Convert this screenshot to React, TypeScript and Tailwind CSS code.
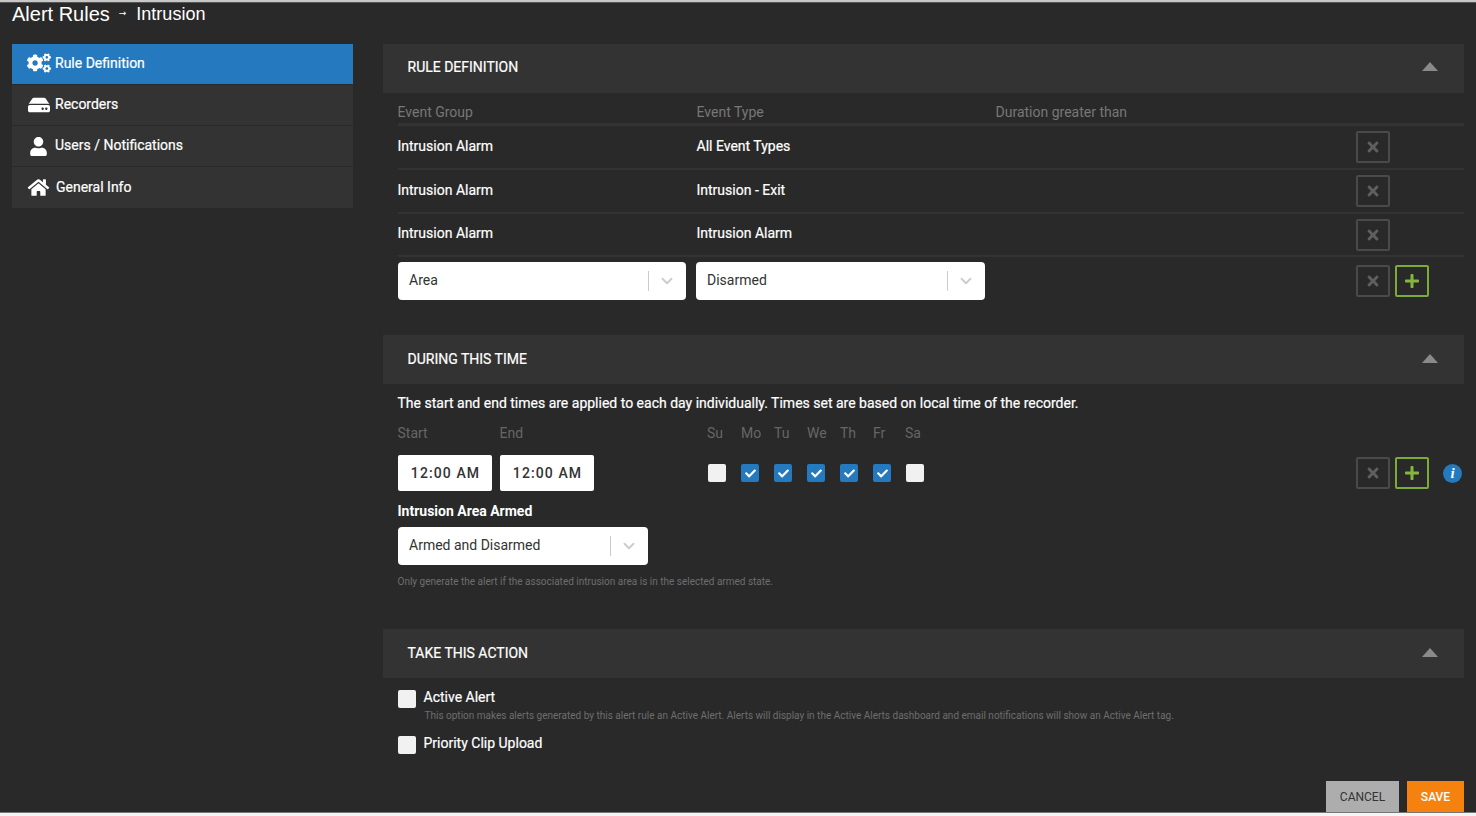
import { FaCogs, FaHdd, FaUser, FaHome, FaCheck, FaTimes, FaPlus } from 'react-icons/fa'
import { FiChevronDown } from 'react-icons/fi'

const nav = [
  { label: 'Rule Definition', icon: <FaCogs className="w-[24px] h-[20px] -mt-[2px]" />, active: true, h: 'h-[40px]', labelClass: 'pb-[2px]' },
  { label: 'Recorders', icon: <FaHdd className="w-[22px] h-[20px] ml-px" />, active: false, h: 'h-[40px]', labelClass: 'pb-[2px]' },
  { label: 'Users / Notifications', icon: <FaUser className="w-[17px] h-[19px] ml-[3px]" />, active: false, h: 'h-[40px]', labelClass: 'pb-[2px]' },
  { label: 'General Info', icon: <FaHome className="w-[23px] h-[19px]" />, active: false, h: 'h-[41px]', labelClass: 'ml-px' },
]

const rows = [
  { group: 'Intrusion Alarm', type: 'All Event Types', h: 'h-[44px]' },
  { group: 'Intrusion Alarm', type: 'Intrusion - Exit', h: 'h-[44px]' },
  { group: 'Intrusion Alarm', type: 'Intrusion Alarm', h: 'h-[43px]' },
]

const days = [
  { label: 'Su', on: false, w: 'w-[34px]' },
  { label: 'Mo', on: true, w: 'w-[33px]' },
  { label: 'Tu', on: true, w: 'w-[33px]' },
  { label: 'We', on: true, w: 'w-[33px]' },
  { label: 'Th', on: true, w: 'w-[33px]' },
  { label: 'Fr', on: true, w: 'w-[32px]' },
  { label: 'Sa', on: false, w: 'w-[33px]' },
]

function SectionHeader({ title, titleClass = '', caretClass = 'mb-[2px]' }: { title: string; titleClass?: string; caretClass?: string }) {
  return (
    <div className="h-[49px] bg-[#333333] flex items-center justify-between pl-[24.5px] pr-[26px]">
      <span className={`text-[14px] text-white [-webkit-text-stroke:0.2px_white] ${titleClass}`}>{title}</span>
      <span className={`w-0 h-0 border-l-[8px] border-r-[8px] border-b-[9px] border-l-transparent border-r-transparent border-b-[#8a8a8a] ${caretClass}`} />
    </div>
  )
}

function Select({ value, className }: { value: string; className: string }) {
  return (
    <div className={`h-[38px] bg-white rounded-[4px] flex items-center pl-[11px] text-[14px] text-[#333333] ${className}`}>
      <span className="flex-1 pb-px">{value}</span>
      <span className="w-px h-[20px] bg-[#cccccc]" />
      <span className="w-[37px] pr-[2px] flex justify-center text-[#cccccc]">
        <FiChevronDown className="w-[18px] h-[18px]" strokeWidth={2.5} />
      </span>
    </div>
  )
}

function RemoveButton() {
  return (
    <div className="w-[34px] h-[32px] rounded-[2px] border-2 border-[#4a4a4a] flex items-center justify-center text-[#5f5f5f]">
      <FaTimes className="w-[16px] h-[16px]" />
    </div>
  )
}

function AddButton() {
  return (
    <div className="w-[34px] h-[32px] rounded-[2px] border-2 border-[#7cab37] flex items-center justify-center text-[#86b73c]">
      <FaPlus className="w-[16px] h-[16px]" />
    </div>
  )
}

function Checkbox({ on }: { on: boolean }) {
  return (
    <div className={`w-[18px] h-[18px] rounded-[2px] flex items-center justify-center ${on ? 'bg-[#2479bf]' : 'bg-[#f1f1f1]'}`}>
      {on && <FaCheck className="w-[11px] h-[11px] text-white" />}
    </div>
  )
}

function TimeBox({ value }: { value: string }) {
  return (
    <div className="w-[94px] h-[36px] bg-white rounded-[2px] flex items-center justify-center pl-px text-[14px] font-medium tracking-[1.1px] text-[#333333]">
      {value}
    </div>
  )
}

export default function App() {
  return (
    <div className="w-[1476px] h-[816px] overflow-hidden bg-[#292929] text-white font-['Roboto',sans-serif] flex flex-col">
      <div className="h-[3px] shrink-0 bg-[#c8c8c8] border-b border-[#555555]" />

      <div className="h-[21px] pl-[12px] flex items-center text-[20px] leading-none shrink-0 font-['Liberation_Sans',sans-serif]">
        <span>Alert Rules</span>
        <span className="ml-[9px] mr-[10px] text-[9px] font-['DejaVu_Sans',sans-serif]">→</span>
        <span className="text-[18px]">Intrusion</span>
      </div>

      <div className="flex-1 flex pt-[20px] pl-[12px] pr-[12px] gap-[30px]">
        {/* Sidebar */}
        <div className="w-[341px] shrink-0 flex flex-col gap-px">
          {nav.map((item) => (
            <div
              key={item.label}
              className={`${item.h} flex items-center text-[14px] [-webkit-text-stroke:0.2px_white] ${item.active ? 'bg-[#2479bf]' : 'bg-[#333333]'}`}
            >
              <span className="w-[43px] pl-[15px] flex justify-start">{item.icon}</span>
              <span className={item.labelClass}>{item.label}</span>
            </div>
          ))}
        </div>

        {/* Main */}
        <div className="flex-1 flex flex-col">
          <SectionHeader title="RULE DEFINITION" titleClass="pb-[2px]" caretClass="mb-[4px]" />
          <div className="pl-[14.5px] h-[30px] pt-[11px] grid grid-cols-[299px_299px_1fr] text-[14px] leading-[17px] text-[#777777]">
            <span>Event Group</span>
            <span>Event Type</span>
            <span>Duration greater than</span>
          </div>
          <div className="ml-[15px] h-[3px] bg-[#333333]" />
          {rows.map((row) => (
            <div key={row.type} className={`ml-[15px] ${row.h} flex items-center border-b-2 border-[#333333] text-[14px]`}>
              <span className="w-[299px] -ml-[0.5px] pb-[2px] [-webkit-text-stroke:0.2px_white]">{row.group}</span>
              <span className="flex-1 pb-[2px] [-webkit-text-stroke:0.2px_white]">{row.type}</span>
              <span className="mr-[74px]">
                <RemoveButton />
              </span>
            </div>
          ))}
          <div className="ml-[15px] pt-[5px] flex items-start">
            <Select value="Area" className="w-[288px]" />
            <Select value="Disarmed" className="w-[289px] ml-[10px]" />
            <div className="ml-auto mr-[35px] mt-[3px] flex gap-[5px]">
              <RemoveButton />
              <AddButton />
            </div>
          </div>

          <div className="mt-[35px]">
            <SectionHeader title="DURING THIS TIME" caretClass="mb-[2px]" />
          </div>
          <div className="pl-[15px] flex flex-col">
            <p className="mt-[10px] -ml-[0.5px] text-[14px] leading-[18px] [-webkit-text-stroke:0.2px_white]">
              The start and end times are applied to each day individually. Times set are based on local time of the recorder.
            </p>
            <div className="mt-[13px] -ml-[0.5px] flex text-[14px] leading-[17px] text-[#666666]">
              <span className="w-[102px]">Start</span>
              <span className="w-[207.5px]">End</span>
              <div className="flex">
                {days.map((d) => (
                  <span key={d.label} className={d.w}>{d.label}</span>
                ))}
              </div>
            </div>
            <div className="mt-[13px] flex items-center">
              <div className="flex gap-[8px]">
                <TimeBox value="12:00 AM" />
                <TimeBox value="12:00 AM" />
              </div>
              <div className="ml-[114px] flex gap-[15px]">
                {days.map((d) => (
                  <Checkbox key={d.label} on={d.on} />
                ))}
              </div>
              <div className="ml-auto flex items-center">
                <div className="flex gap-[5px] mr-[14px] -mt-px">
                  <RemoveButton />
                  <AddButton />
                </div>
                <span className="w-[19px] h-[19px] mr-[2px] rounded-full bg-[#2479bf] flex items-center justify-center font-['Liberation_Serif',serif] italic font-bold text-[15px] leading-none text-white">
                  i
                </span>
              </div>
            </div>
            <div className="mt-[11px] -ml-[0.5px] text-[14px] leading-[18px] font-bold">Intrusion Area Armed</div>
            <Select value="Armed and Disarmed" className="w-[250px] mt-[7px]" />
            <p className="mt-[11px] -ml-[0.5px] text-[10px] leading-[12px] text-[#6e6e6e]">
              Only generate the alert if the associated intrusion area is in the selected armed state.
            </p>
          </div>

          <div className="mt-[41px]">
            <SectionHeader title="TAKE THIS ACTION" />
          </div>
          <div className="pl-[15px] flex flex-col">
            <div className="mt-[11px] flex">
              <div className="mt-px">
                <Checkbox on={false} />
              </div>
              <div className="ml-[7.5px]">
                <div className="text-[14px] leading-[17px] [-webkit-text-stroke:0.2px_white]">Active Alert</div>
                <div className="mt-[4px] ml-px text-[10px] leading-[12px] text-[#6e6e6e]">
                  This option makes alerts generated by this alert rule an Active Alert. Alerts will display in the Active Alerts dashboard and email notifications will show an Active Alert tag.
                </div>
              </div>
            </div>
            <div className="mt-[13px] flex">
              <div className="mt-px">
                <Checkbox on={false} />
              </div>
              <div className="ml-[7.5px] text-[14px] leading-[17px] [-webkit-text-stroke:0.2px_white]">Priority Clip Upload</div>
            </div>
          </div>

          <div className="mt-[27px] flex justify-end gap-[8px]">
            <div className="w-[73px] h-[31px] bg-[#adadad] flex items-center justify-center text-[12px] text-[#333333]">CANCEL</div>
            <div className="w-[57px] h-[31px] bg-[#f5820f] flex items-center justify-center text-[12px] font-medium text-white">SAVE</div>
          </div>
        </div>
      </div>

      <div className="h-[4px] shrink-0 bg-[#f4f4f4] border-t border-[#777777]" />
    </div>
  )
}
